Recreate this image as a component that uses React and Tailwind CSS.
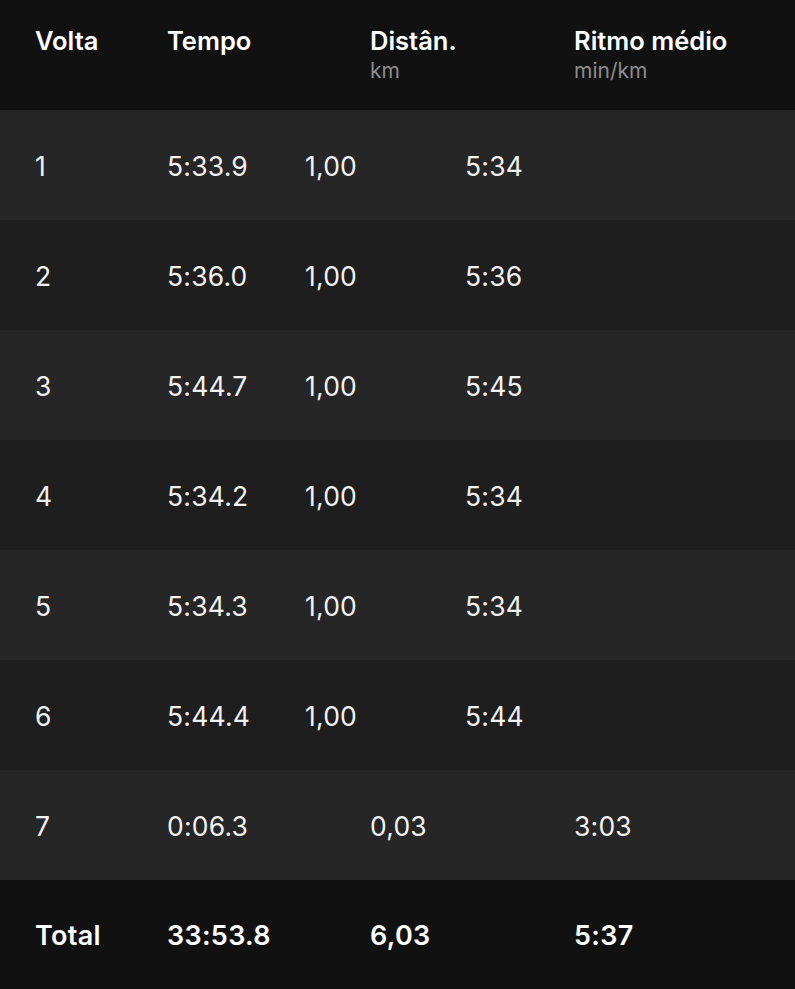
import React from "react";

const laps = [
  { n: "1", time: "5:33.9", dist: "1,00", pace: "5:34", narrow: true },
  { n: "2", time: "5:36.0", dist: "1,00", pace: "5:36", narrow: true },
  { n: "3", time: "5:44.7", dist: "1,00", pace: "5:45", narrow: true },
  { n: "4", time: "5:34.2", dist: "1,00", pace: "5:34", narrow: true },
  { n: "5", time: "5:34.3", dist: "1,00", pace: "5:34", narrow: true },
  { n: "6", time: "5:44.4", dist: "1,00", pace: "5:44", narrow: true },
  { n: "7", time: "0:06.3", dist: "0,03", pace: "3:03", narrow: false },
];

const font = { fontFamily: "Inter, 'Noto Sans', sans-serif" };

const LapRow = ({ lap, index }) => {
  const bg = index % 2 === 0 ? "bg-[#262626]" : "bg-[#1e1e1e]";
  return (
    <div className={`flex items-center h-[110px] pl-[35px] pt-[3px] text-[26.5px] tracking-[0.2px] text-[#f2f2f2] ${bg}`}>
      <div className="w-[132px]">{lap.n}</div>
      <div className={lap.narrow ? "w-[138px]" : "w-[203px]"}>{lap.time}</div>
      <div className={lap.narrow ? "w-[160px]" : "w-[204px]"}>{lap.dist}</div>
      <div>{lap.pace}</div>
    </div>
  );
};

export default function App() {
  return (
    <div className="w-[795px] h-[989px] overflow-hidden bg-[#111111]" style={font}>
      {/* header */}
      <div className="flex h-[110px] pl-[35px] pt-[24px] bg-[#111111] text-white">
        <div className="w-[132px] text-[25.5px] font-semibold leading-[34px]">Volta</div>
        <div className="w-[203px] text-[25.5px] font-semibold leading-[34px]">Tempo</div>
        <div className="w-[204px]">
          <div className="text-[25.5px] font-semibold leading-[34px]">Distân.</div>
          <div className="text-[21px] leading-[26px] text-[#8c8c8c]">km</div>
        </div>
        <div>
          <div className="text-[25.5px] font-semibold leading-[34px]">Ritmo médio</div>
          <div className="text-[21px] leading-[26px] text-[#8c8c8c]">min/km</div>
        </div>
      </div>

      {laps.map((lap, i) => (
        <LapRow key={lap.n} lap={lap} index={i} />
      ))}

      {/* total */}
      <div className="flex items-center h-[110px] pl-[35px] pt-[3px] bg-[#111111] text-white text-[27px] tracking-[0.3px] font-semibold">
        <div className="w-[132px]">Total</div>
        <div className="w-[203px]">33:53.8</div>
        <div className="w-[204px]">6,03</div>
        <div>5:37</div>
      </div>
    </div>
  );
}
